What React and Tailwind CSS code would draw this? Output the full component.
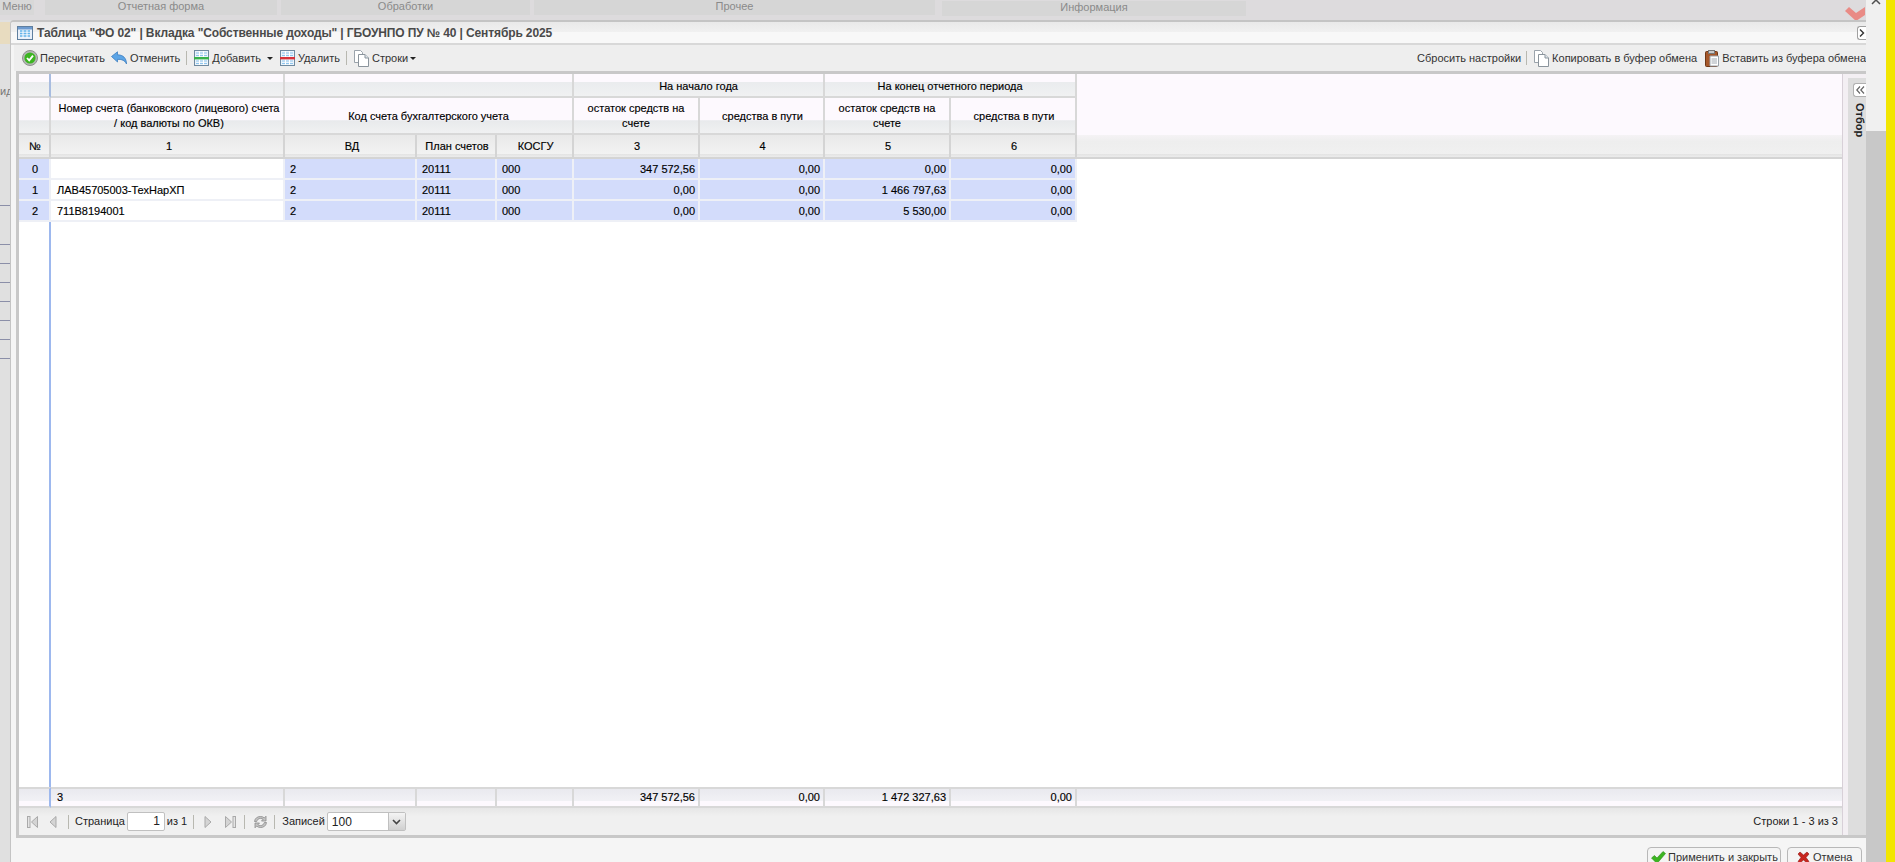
const widths = [32, 234, 132, 80, 77, 126, 125, 126, 126]

const rows = [
  { n: '0', acc: '', vals: ['347 572,56', '0,00', '0,00', '0,00'] },
  { n: '1', acc: 'ЛАВ45705003-ТехНарХП', vals: ['0,00', '0,00', '1 466 797,63', '0,00'] },
  { n: '2', acc: '711В8194001', vals: ['0,00', '0,00', '5 530,00', '0,00'] },
]

const totals = ['347 572,56', '0,00', '1 472 327,63', '0,00']

const headTop = 'bg-[linear-gradient(#fdf9fe_0%,#fdf9fe_35%,#eaecee_38%,#f0f1f2_100%)] border-r-2 border-b-2 border-[#d8d8d8] p-0 pt-[2px] font-normal text-center align-middle leading-[15px]'
const headMid = 'bg-[linear-gradient(#fdf9fe_0%,#fdf9fe_62%,#e8eaec_65%,#f0f1f2_100%)] border-r-2 border-b-2 border-[#d8d8d8] p-0 pt-px font-normal text-center align-middle leading-[15px]'
const headLow = 'bg-[linear-gradient(#e9e9e9_0%,#f2f2f2_85%,#e4e4e4_88%,#ececec_100%)] border-r-2 border-b-2 border-[#d4d4d4] p-0 pl-[2px] font-normal text-center align-middle'
const cellBlue = 'bg-[#d3dcfb] border-r-2 border-b-2 border-[#eef0f6] p-0 pt-px h-[21px] pl-[5px] pr-[3px]'
const footCell = 'border-t-2 border-b-2 border-r-2 border-[#d8d8d8] p-0'

function Cols() {
  return (
    <colgroup>
      {widths.map((w, i) => (
        <col key={i} style={{ width: w }} />
      ))}
      <col />
    </colgroup>
  )
}

function TitleIcon() {
  return (
    <svg width="16" height="14" viewBox="0 0 16 14" className="shrink-0">
      <rect x="0.5" y="0.5" width="15" height="13" fill="#e8f0fa" stroke="#5f7f9f" />
      <rect x="1" y="1" width="14" height="2.5" fill="#6d9bd0" />
      <path d="M3 5h10M3 7.500h10M3 10h10" stroke="#63b4ea" strokeWidth="1.400" />
      <path d="M6 4v8M10 4v8" stroke="#ffffff" />
    </svg>
  )
}

function CheckIcon() {
  return (
    <svg width="16" height="16" viewBox="0 0 16 16" className="shrink-0">
      <circle cx="8" cy="8" r="7.500" fill="#b5b8b5" stroke="#8d918d" />
      <circle cx="8" cy="8" r="5.600" fill="#3cb521" />
      <path d="M5 8l2.200 2.400L11 5.600" fill="none" stroke="#ffffff" strokeWidth="1.800" />
    </svg>
  )
}

function BackIcon() {
  return (
    <svg width="16" height="14" viewBox="0 0 16 14" className="shrink-0">
      <path d="M0.500 5.500L6.500 0.800v3C12 3.800 15.500 7 15.500 13c-1.600-3.600-4.600-4.800-9-4.600v2.600z" fill="#5da5e6" stroke="#3f7fc0" strokeWidth="0.800" />
    </svg>
  )
}

function RowIcon({ bar }) {
  return (
    <svg width="15" height="16" viewBox="0 0 15 16" className="shrink-0">
      <rect x="0.500" y="0.500" width="14" height="15" fill="#eaf3fb" stroke="#6f8aa0" />
      <path d="M2 3h11M2 5.500h11M2 11h11M2 13.500h11" stroke="#8fc6ee" strokeWidth="1.200" />
      <path d="M5.500 1v14M9.500 1v14" stroke="#ffffff" />
      <rect x="0" y="7" width="15" height="2.400" fill={bar} />
    </svg>
  )
}

function DocIcon() {
  return (
    <svg width="15" height="17" viewBox="0 0 15 17" className="shrink-0">
      <path d="M0.500 0.500h6l2 2v10h-8z" fill="#ffffff" stroke="#9aa3ab" />
      <path d="M4.500 4.500h6.500l3.500 3.500v8.500h-10z" fill="#ffffff" stroke="#8b949c" />
      <path d="M11 4.500v3.500h3.500" fill="#dfe6ec" stroke="#8b949c" />
    </svg>
  )
}

function ClipIcon() {
  return (
    <svg width="14" height="17" viewBox="0 0 14 17" className="shrink-0">
      <rect x="0.500" y="1.500" width="12" height="15" rx="1" fill="#a5572a" stroke="#6e3716" />
      <rect x="3.500" y="0.500" width="6" height="3" fill="#c9c9c9" stroke="#777777" />
      <path d="M5 6h8.500v10H5z" fill="#ffffff" stroke="#9aa3ab" />
      <path d="M6.500 9h5.500M6.500 11h5.500M6.500 13h5.500" stroke="#a0a8b0" />
    </svg>
  )
}

function Caret({ className }) {
  return <span className={`block w-0 h-0 border-x-[3px] border-x-transparent border-t-[3px] border-t-[#222222] ${className}`} />
}

function Sep({ className }) {
  return <span className={`w-px h-[14px] bg-[#b8b8b0] ${className}`} />
}

function PagerIcon({ kind, className }) {
  const stroke = '#a9a9a9'
  return (
    <svg width="11" height="12" viewBox="0 0 11 12" className={`shrink-0 ${className}`}>
      {kind === 'first' && (
        <>
          <rect x="0.500" y="0.500" width="2.500" height="11" fill="#e4e4e4" stroke={stroke} />
          <path d="M10.500 0.500v11L4.500 6z" fill="#d4d4d4" stroke={stroke} />
        </>
      )}
      {kind === 'prev' && <path d="M8 0.500v11L2 6z" fill="#d4d4d4" stroke={stroke} />}
      {kind === 'next' && <path d="M3 0.500v11L9 6z" fill="#d4d4d4" stroke={stroke} />}
      {kind === 'last' && (
        <>
          <rect x="8" y="0.500" width="2.500" height="11" fill="#e4e4e4" stroke={stroke} />
          <path d="M0.500 0.500v11L6.500 6z" fill="#d4d4d4" stroke={stroke} />
        </>
      )}
    </svg>
  )
}

function RefreshIcon({ className }) {
  return (
    <svg width="15" height="14" viewBox="0 0 15 14" className={`shrink-0 ${className}`}>
      <path d="M1.500 6.500C2 3 4.500 1.500 7.500 1.500c1.600 0 2.800.5 3.800 1.400L13 1.200V6H8.500l1.600-1.700C9.400 3.700 8.500 3.400 7.500 3.400c-1.800 0-3.200 1-3.800 3.100z" fill="#c4c4c4" stroke="#8a8a8a" strokeWidth="0.800" />
      <path d="M13.500 7.500C13 11 10.500 12.500 7.500 12.500c-1.600 0-2.800-.5-3.800-1.400L2 12.800V8h4.500L4.900 9.700c.7.6 1.600.9 2.600.9 1.800 0 3.200-1 3.800-3.100z" fill="#c4c4c4" stroke="#8a8a8a" strokeWidth="0.800" />
    </svg>
  )
}

export default function App() {
  return (
    <div className="h-[862px] w-[1895px] overflow-hidden flex bg-[#e0e0e0] text-[11px] text-black font-['Liberation_Sans',Arial,sans-serif]">
      <div className="relative flex-1 min-w-0">
        {/* app behind the dialog */}
        <div className="flex h-5 gap-[4px] text-center text-[11px] leading-[13px] text-[#8a8a8a] bg-[#dddbdd]">
          <div className="w-[34px] h-[15px] bg-[#d8d8d8]">Меню</div>
          <div className="ml-[7px] w-[232px] h-[15px] bg-[#d6d6d6]">Отчетная форма</div>
          <div className="w-[249px] h-[15px] bg-[#d6d6d6]">Обработки</div>
          <div className="w-[401px] h-[15px] bg-[#d6d6d6]">Прочее</div>
          <div className="ml-[3px] w-[304px] h-[15px] mt-px bg-[#d6d6d6]">Информация</div>
        </div>
        <div className="h-[22px] w-[10px] mt-[2px] bg-[#e8dcc0]" />
        <div className="w-[10px] mt-[40px] text-[#777777] leading-[14px] whitespace-nowrap">ид</div>
        <div className="w-[10px] mt-[107px] h-px bg-[#8b8fa8]" />
        <div className="w-[10px] mt-[38px] flex flex-col gap-[18px]">
          {[0, 1, 2, 3, 4, 5, 6].map((i) => (
            <div key={i} className="h-px bg-[#8b8fa8]" />
          ))}
        </div>
        <svg width="20" height="14" viewBox="0 0 20 14" className="absolute left-[1845px] top-[7px]">
          <path d="M0 4l4-4 7 6 9-6v8l-9 6z" fill="#e98b86" />
        </svg>

        {/* dialog */}
        <div className="absolute left-[10px] top-5 w-[1856px] h-[842px] flex flex-col bg-[#f5f5f5] border-t-2 border-l border-[#c4c4c4] rounded-tl-[4px] overflow-hidden">
          <div className="h-[23px] shrink-0 flex items-center pl-[6px] gap-[4px] border-b-2 border-[#d8d8d8] bg-[linear-gradient(#e9e9e9_0%,#f0f0f0_45%,#f8f8f8_50%,#f8f8f8_100%)]">
            <TitleIcon />
            <span className="font-bold text-[12px] text-[#4a4a4a] whitespace-nowrap tracking-[-0.12px]">
              Таблица "ФО 02" | Вкладка "Собственные доходы" | ГБОУНПО ПУ № 40 | Сентябрь 2025
            </span>
            <span className="ml-auto w-[9px] h-[14px] border border-r-0 border-[#a0a0a0] rounded-l-[3px] bg-white flex items-center justify-center">
              <svg width="6" height="8" viewBox="0 0 6 8">
                <path d="M1 0.500L4.500 4L1 7.500" fill="none" stroke="#333333" strokeWidth="1.400" />
              </svg>
            </span>
          </div>

          <div className="h-[26px] shrink-0 ml-[3px] flex items-center pl-[8px] bg-[#eeeeee] text-[#333333] whitespace-nowrap overflow-hidden">
            <CheckIcon />
            <span className="ml-[2px]">Пересчитать</span>
            <span className="ml-[6px]"><BackIcon /></span>
            <span className="ml-[3px]">Отменить</span>
            <Sep className="ml-[6px]" />
            <span className="ml-[7px]"><RowIcon bar="#37b24a" /></span>
            <span className="ml-[3px]">Добавить</span>
            <Caret className="ml-[6px]" />
            <span className="ml-[7px]"><RowIcon bar="#d8333a" /></span>
            <span className="ml-[3px]">Удалить</span>
            <Sep className="ml-[6px]" />
            <span className="ml-[7px]"><DocIcon /></span>
            <span className="ml-[3px]">Строки</span>
            <Caret className="ml-[2px]" />
            <span className="ml-auto">Сбросить настройки</span>
            <Sep className="ml-[5px]" />
            <span className="ml-[7px]"><DocIcon /></span>
            <span className="ml-[3px]">Копировать в буфер обмена</span>
            <span className="ml-[8px]"><ClipIcon /></span>
            <span className="ml-[3px]">Вставить из буфера обмена</span>
          </div>

          <div className="flex-1 min-h-0 flex ml-[5px] mb-[24px] border-t-[3px] border-b-[3px] border-l-[3px] border-[#c8c8c8]">
            <div className="flex-1 min-w-0 flex flex-col bg-white border-r border-[#d8d0d8]">
              <table className="table-fixed w-full border-separate border-spacing-0 shrink-0 [-webkit-text-stroke:0.15px_black]">
                <Cols />
                <thead>
                  <tr className="h-[24px]">
                    <th className={`${headTop} !border-r-[#a8bce0]`} />
                    <th className={headTop} />
                    <th className={headTop} colSpan={3} />
                    <th className={headTop} colSpan={2}>На начало года</th>
                    <th className={headTop} colSpan={2}>На конец отчетного периода</th>
                    <th className="bg-[#fdf9fe] p-0" />
                  </tr>
                  <tr className="h-[37px]">
                    <th className={headMid} />
                    <th className={`${headMid} pl-[4px]`}>Номер счета (банковского (лицевого) счета<br />/ код валюты по ОКВ)</th>
                    <th className={headMid} colSpan={3}>Код счета бухгалтерского учета</th>
                    <th className={headMid}>остаток средств на<br />счете</th>
                    <th className={`${headMid} pl-[2px]`}>средства в пути</th>
                    <th className={headMid}>остаток средств на<br />счете</th>
                    <th className={`${headMid} pl-[2px]`}>средства в пути</th>
                    <th className="bg-[#fdf9fe] p-0" />
                  </tr>
                  <tr className="h-[24px]">
                    <th className={headLow}>№</th>
                    <th className={`${headLow} !pl-[4px]`}>1</th>
                    <th className={`${headLow} !pl-[4px]`}>ВД</th>
                    <th className={headLow}>План счетов</th>
                    <th className={headLow}>КОСГУ</th>
                    <th className={headLow}>3</th>
                    <th className={headLow}>4</th>
                    <th className={headLow}>5</th>
                    <th className={headLow}>6</th>
                    <th className="bg-[linear-gradient(#f5f3f5_0%,#eeeeee_30%,#f0f0f0_85%,#e4e4e4_88%,#ececec_100%)] border-b-2 border-[#d4d4d4] p-0" />
                  </tr>
                </thead>
                <tbody>
                  {rows.map((row) => (
                    <tr key={row.n}>
                      <td className="bg-[#d3dcfb] border-r-2 border-b-2 border-[#eef0f6] h-[21px] p-0 pt-px pl-[2px] text-center">{row.n}</td>
                      <td className="bg-white border-r-2 border-b-2 border-[#eef0f6] p-0 pt-px pl-[6px]">{row.acc}</td>
                      <td className={cellBlue}>2</td>
                      <td className={cellBlue}>20111</td>
                      <td className={cellBlue}>000</td>
                      {row.vals.map((v, i) => (
                        <td key={i} className={`${cellBlue} text-right`}>{v}</td>
                      ))}
                      <td className="p-0" />
                    </tr>
                  ))}
                </tbody>
              </table>

              <div className="flex-1 min-h-0 flex">
                <div className="w-[32px] border-r-2 border-[#9db8ee]" />
              </div>

              <table className="table-fixed w-full border-separate border-spacing-0 shrink-0 [-webkit-text-stroke:0.15px_black]">
                <Cols />
                <tbody>
                  <tr className="h-[21px] bg-[linear-gradient(#e8e8ee_0%,#f1f1f5_65%,#fdf9fe_68%,#fdf9fe_100%)]">
                    <td className="border-t-2 border-b-2 border-r-2 border-t-[#d8d8d8] border-b-[#d8d8d8] border-r-[#9db8ee] p-0" />
                    <td className={`${footCell} pl-[6px]`}>3</td>
                    <td className={footCell} />
                    <td className={footCell} />
                    <td className={footCell} />
                    {totals.map((v, i) => (
                      <td key={i} className={`${footCell} pr-[3px] text-right`}>{v}</td>
                    ))}
                    <td className="border-t-2 border-b-2 border-[#d8d8d8] p-0" />
                  </tr>
                </tbody>
              </table>

              <div className="h-[27px] shrink-0 flex items-center pl-[8px] pr-[4px] text-[#222222] bg-[linear-gradient(#e6e6e6_0%,#f0f0f0_30%,#f0f0f0_100%)] whitespace-nowrap">
                <PagerIcon kind="first" />
                <PagerIcon kind="prev" className="ml-[10px]" />
                <Sep className="ml-[9px]" />
                <span className="ml-[6px]">Страница</span>
                <span className="ml-[2px] w-[38px] h-[19px] bg-white border border-[#c0c0c0] rounded-[2px] text-right text-[12px] pr-[4px] leading-[17px]">1</span>
                <span className="ml-[2px]">из 1</span>
                <Sep className="ml-[6px]" />
                <PagerIcon kind="next" className="ml-[8px]" />
                <PagerIcon kind="last" className="ml-[12px]" />
                <Sep className="ml-[8px]" />
                <RefreshIcon className="ml-[8px]" />
                <Sep className="ml-[6px]" />
                <span className="ml-[7px]">Записей</span>
                <span className="ml-[2px] w-[79px] h-[19px] bg-white border border-[#c0c0c0] rounded-[2px] flex items-center pl-[4px] text-[12px]">
                  100
                  <span className="ml-auto w-[17px] h-full bg-[linear-gradient(#f4f4f4,#d0d0d0)] border-l border-[#c0c0c0] flex items-center justify-center">
                    <svg width="9" height="6" viewBox="0 0 9 6">
                      <path d="M1 1l3.500 3.500L8 1" fill="none" stroke="#444444" strokeWidth="1.600" />
                    </svg>
                  </span>
                </span>
                <span className="ml-auto">Строки 1 - 3 из 3</span>
              </div>
            </div>

            <div className="w-[23px] shrink-0 pl-[5px] bg-[#f3eff3]">
              <div className="h-[calc(100%-4px)] mt-[4px] pt-[5px] bg-[#dddddd] flex flex-col items-end">
                <span className="w-[13px] h-[14px] bg-white border border-r-0 border-[#b0b0b0] rounded-l-[3px] flex items-center justify-center">
                  <svg width="9" height="8" viewBox="0 0 9 8">
                    <path d="M4 0.500L0.800 4L4 7.500M8 0.500L4.800 4L8 7.500" fill="none" stroke="#666666" strokeWidth="1.200" />
                  </svg>
                </span>
                <span className="mt-[6px] font-bold text-[11px] text-[#222222] leading-[13px] [writing-mode:vertical-rl]">Отбор</span>
              </div>
            </div>
          </div>

          <div className="absolute left-[1636px] top-[825px] flex gap-[6px] text-[11px] text-[#333333] whitespace-nowrap">
            <div className="w-[134px] h-[20px] bg-[#f4f4f4] border border-[#b8b8b8] rounded-t-[4px] flex items-center pl-[3px] gap-[2px]">
              <svg width="15" height="13" viewBox="0 0 15 13" className="shrink-0">
                <path d="M0.500 7l3-2.500L6 7l6-6.500 2.500 2L6 12.500z" fill="#3cb521" stroke="#2c8c18" strokeWidth="0.600" />
              </svg>
              Применить и закрыть
            </div>
            <div className="w-[75px] h-[20px] bg-[#f4f4f4] border border-[#b8b8b8] rounded-t-[4px] flex items-center pl-[9px] gap-[3px]">
              <svg width="13" height="13" viewBox="0 0 13 13" className="shrink-0">
                <path d="M1 3l2-2 3.500 3L10 1l2 2-3 3.500 3 4-2 1.500-3.500-3L3 12l-2-1.500 3-4z" fill="#c8261f" stroke="#8f1a15" strokeWidth="0.600" />
              </svg>
              Отмена
            </div>
          </div>
        </div>
      </div>

      <div className="w-5 shrink-0 bg-[#f0f0f0] flex flex-col items-center">
        <svg width="10" height="6" viewBox="0 0 10 6" className="mt-[-1px]">
          <path d="M1 5l4-4 4 4" fill="none" stroke="#505050" strokeWidth="1.500" />
        </svg>
        <div className="mt-[126px] flex-1 w-full bg-[#c8c8c8]" />
      </div>
      <div className="w-[9px] shrink-0 bg-[#f2e600]" />
    </div>
  )
}
